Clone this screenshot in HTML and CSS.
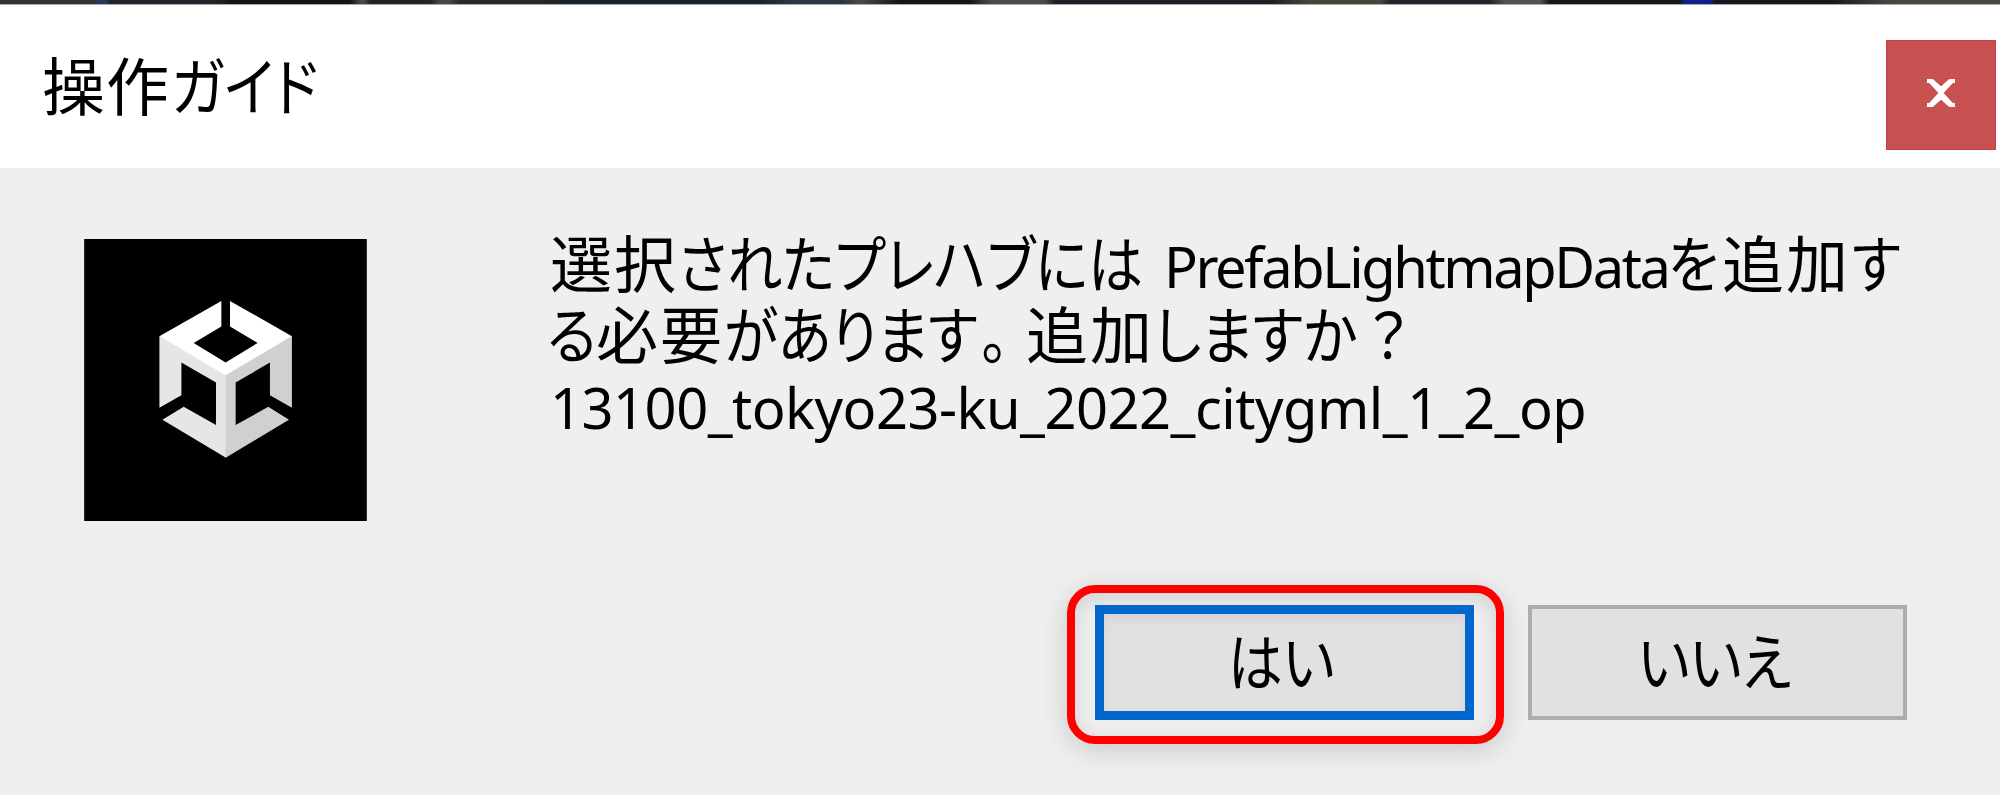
FILE: index.html
```html
<!DOCTYPE html>
<html lang="ja">
<head>
<meta charset="utf-8">
<title>操作ガイド</title>
<link rel="stylesheet" href="styles.css">
</head>
<body>
<div class="dialog">
  <div class="backdrop-edge"></div>
  <header class="titlebar">
    <h1 class="title">操作<span class="narrow title-kana">ガイド</span></h1>
    <button class="close" aria-label="閉じる">
      <svg width="32" height="28" viewBox="0 0 32 28"><path d="M2 2H7L16 10L25 2H30M2 26H7L16 18L25 26H30M5 2L27 26M27 2L5 26" fill="none" stroke="#fff" stroke-width="4" stroke-linejoin="round"/></svg>
    </button>
  </header>
  <main class="content">
    <svg class="logo" viewBox="42 57 849 847">
      <rect x="42" y="57" width="849" height="847" fill="#000"/>
      <path fill="#e6e6e6" d="M268 348L468 462V714L277 600L341 561L438 616V488L334 428V526L268 564Z"/>
      <path fill="#d0d0d0" d="M666 348L467 462V714L657 600L595 561L497 616V488L600 428V526L666 564Z"/>
      <path fill="#fff" d="M454 243V320L371 369L467 428L563 369L480 320V243L666 349L467 466L268 349Z"/>
    </svg>
    <div class="message">
      <p class="line"><span class="kanji">選択</span><span class="narrow k1">されたプレハブには</span><span class="latin name">PrefabLightmapData</span><span class="narrow wo">を</span><span class="kanji">追加</span><span class="narrow su">す</span></p>
      <p class="line second"><span class="narrow ru">る</span><span class="kanji">必要</span><span class="narrow k2">があります</span><span class="narrow stop">。</span><span class="kanji">追加</span><span class="narrow k3">しますか</span><span class="narrow ask">？</span></p>
      <p class="line third"><span class="latin file">13100_tokyo23-ku_2022_citygml_1_2_op</span></p>
    </div>
  </main>
  <footer class="actions">
    <div class="highlight"><button class="btn primary"><span class="label">はい</span></button></div>
    <button class="btn"><span class="label">いいえ</span></button>
  </footer>
</div>
</body>
</html>
```
FILE: styles.css
```css
* { box-sizing: border-box; }
body { margin: 0; background: #efefef; color: #000; font-family: "Noto Sans CJK JP", sans-serif; }
.dialog { width: 2000px; height: 795px; overflow: hidden; display: flex; flex-direction: column; background: #efefef; }
.backdrop-edge {
  height: 5px; flex: none; border-bottom: 1px solid #a8a8a8;
  background: linear-gradient(90deg, #34322e 0 94px, #253a58 96px 106px, #20242a 110px 220px, #141414 230px 350px, #4a4844 360px 364px, #222 370px 430px, #4a4844 440px 450px, #292929 460px 540px, #1a232d 560px 760px, #2b3642 790px 840px, #4a4a48 860px, #151515 900px 970px, #4b4b48 990px 1045px, #1c2026 1055px 1270px, #49453b 1310px 1380px, #20252c 1390px 1490px, #55534d 1505px 1540px, #15171b 1550px 1680px, #10208a 1685px 1710px, #15191e 1715px 1830px, #48463e 1890px 2000px);
}
.titlebar { height: 163px; flex: none; background: #fff; display: flex; justify-content: space-between; padding: 35px 4px 0 42px; }
.title { margin: -2px 0 0; font-size: 63px; line-height: 90px; font-weight: 400; white-space: nowrap; letter-spacing: 1px; }
.narrow, .label { display: inline-block; font-feature-settings: "palt"; transform: scaleX(.888); transform-origin: left; }
.title-kana { margin-left: 1px; letter-spacing: 0; }
.close { width: 110px; height: 110px; padding: 0; border: 1px solid #c24040; background: #c75050; display: grid; place-items: center; }
.close svg { margin-top: -4px; }
.content { height: 417px; flex: none; display: flex; padding: 71px 0 0 84px; }
.logo { width: 283px; height: 282px; flex: none; }
.message { margin: -13px 0 0 183px; white-space: nowrap; }
.line { margin: 0; height: 71px; line-height: 71px; display: flex; align-items: baseline; font-size: 62px; }
.kanji { letter-spacing: 2px; width: 128px; }
.k1 { width: 486px; }
.wo { width: 54px; }
.kanji + .su { margin-left: 2px; transform: scaleX(.87); }
.ru { width: 49px; margin-left: -3px; }
.k2 { width: 257px; }
.stop { width: 45px; }
.k3 { width: 214px; transform: scaleX(.9); }
.ask { transform: scaleX(.9); }
.third { margin-top: 4px; }
.latin { font-family: "Noto Sans", sans-serif; font-size: 56px; }
.name { width: 504px; letter-spacing: -2.4px; }
.file { letter-spacing: -.5px; }
.actions { display: flex; padding-left: 1067px; gap: 24px; }
.highlight { width: 437px; height: 159px; border: 8px solid #f00; border-radius: 28px; padding: 12px 20px; box-shadow: 0 6px 28px rgba(0,0,0,.16), inset 0 5px 20px rgba(0,0,0,.13); }
.btn { width: 379px; height: 115px; margin-top: 20px; padding: 0 6px 8px 0; border: 4px solid #adadad; background: #e1e1e1; color: #000; font-family: "Noto Sans CJK JP", sans-serif; font-size: 62px; line-height: 90px; }
.label { transform-origin: center; }
.primary { margin-top: 0; border: 9px solid #0067cc; box-shadow: inset 0 5px 12px rgba(0,0,0,.06); }
```
